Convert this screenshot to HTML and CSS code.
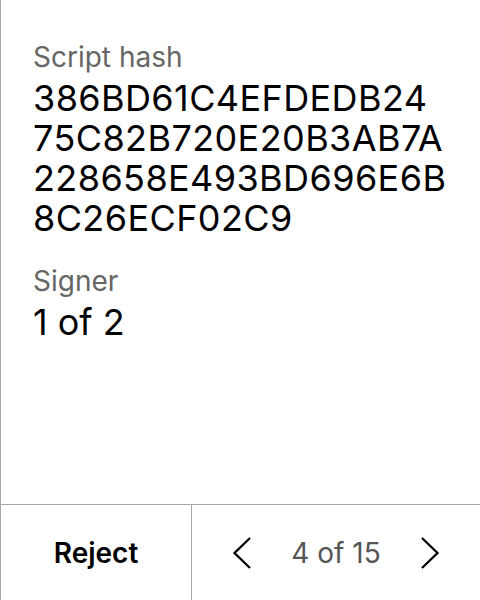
FILE: index.html
```html
<!DOCTYPE html>
<html>
<head>
<meta charset="utf-8">
<link rel="stylesheet" href="styles.css">
</head>
<body>
<div class="screen">
  <div class="content">
    <div class="field">
      <div class="label">Script hash</div>
      <div class="value hash">386BD61C4EFDEDB24<br>75C82B720E20B3AB7A<br>228658E493BD696E6B<br>8C26ECF02C9</div>
    </div>
    <div class="field">
      <div class="label">Signer</div>
      <div class="value">1 of 2</div>
    </div>
  </div>
  <div class="footer">
    <div class="reject">Reject</div>
    <div class="pager">
      <svg class="chev" width="20" height="32" viewBox="0 0 20 32"><path d="M18 1 L2.5 16 L18 31" fill="none" stroke="#000" stroke-width="2.3"/></svg>
      <span class="count">4 of 15</span>
      <svg class="chev" width="20" height="32" viewBox="0 0 20 32"><path d="M2 1 L17.5 16 L2 31" fill="none" stroke="#000" stroke-width="2.3"/></svg>
    </div>
  </div>
</div>
</body>
</html>
```
FILE: styles.css
```css
* { box-sizing: border-box; }
html, body { margin: 0; padding: 0; background: #fff; }
body { font-family: Inter, "Noto Sans", sans-serif; color: #000; }
.screen {
  width: 480px;
  height: 600px;
  border-left: 1px solid #a8a8a8;
  display: flex;
  flex-direction: column;
}
.content {
  flex: 1;
  padding: 41px 0 0 32px;
  display: flex;
  flex-direction: column;
  gap: 27px;
}
.label {
  font-size: 28px;
  line-height: 32px;
  color: #666;
  margin-bottom: 5px;
}
.value {
  font-size: 36px;
  line-height: 40px;
  color: #000;
  white-space: nowrap;
}
.value.hash {
  letter-spacing: 0.4px;
}
.footer {
  height: 96px;
  border-top: 1px solid #a8a8a8;
  display: flex;
}
.reject {
  width: 191px;
  border-right: 1px solid #a8a8a8;
  display: flex;
  align-items: center;
  justify-content: center;
  font-size: 28px;
  font-weight: 600;
}
.pager {
  flex: 1;
  display: flex;
  align-items: center;
  justify-content: space-between;
  padding: 0 40px 0 40px;
}
.count {
  font-size: 28px;
  color: #555;
}
.chev { display: block; }
```
